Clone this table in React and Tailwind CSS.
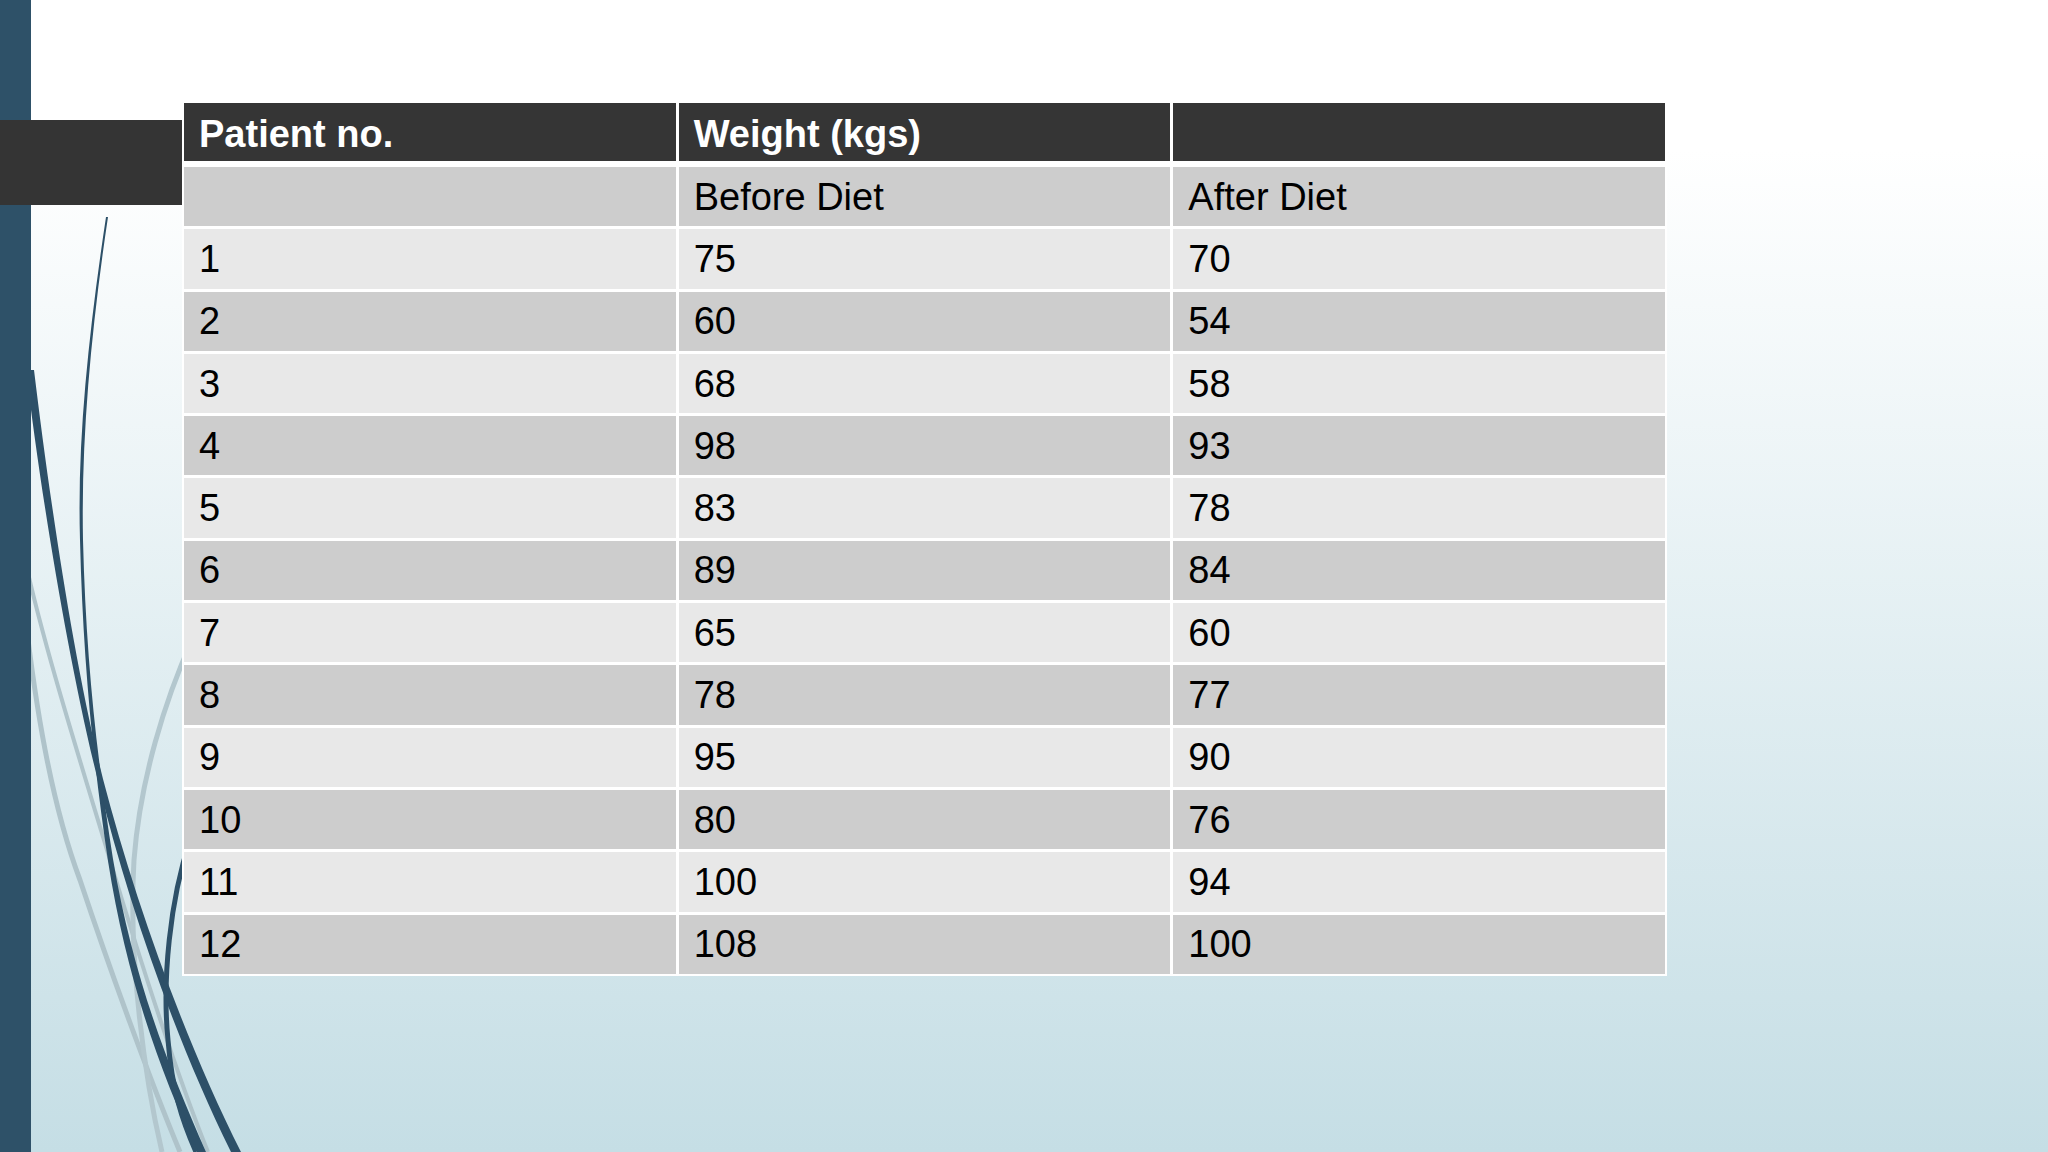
import React from 'react';

const rows = [
  ['', 'Before Diet', 'After Diet'],
  ['1', '75', '70'],
  ['2', '60', '54'],
  ['3', '68', '58'],
  ['4', '98', '93'],
  ['5', '83', '78'],
  ['6', '89', '84'],
  ['7', '65', '60'],
  ['8', '78', '77'],
  ['9', '95', '90'],
  ['10', '80', '76'],
  ['11', '100', '94'],
  ['12', '108', '100'],
];

const Swooshes = () => (
  <svg
    className="absolute inset-0 w-full h-full pointer-events-none"
    viewBox="0 0 2048 1152"
    fill="none"
  >
    {/* light strands */}
    <path d="M25 560 C45 650 80 760 110 860 C140 960 175 1070 208 1152" stroke="#afc3ca" strokeWidth="4" />
    <path d="M25 615 C35 700 50 800 80 880 C110 970 150 1080 180 1152" stroke="#afc3ca" strokeWidth="5" />
    <path d="M192 640 C165 700 140 780 134 860 C128 960 145 1080 162 1152" stroke="#b3c7ce" strokeWidth="5" />
    {/* dark strands */}
    <path
      d="M106 217 C89 330 77 440 80 540 C83 660 93 760 108 861 C127 982 161 1072 197 1152 L206 1152 C169 1068 133 978 113 859 C97 758 86 660 83 540 C81 440 91 330 108 217 Z"
      fill="#2d5068"
    />
    <path
      d="M26 370 C41 495 68 660 98 781 C127 901 176 1041 231 1152 L241 1152 C184 1039 134 898 103 779 C73 659 49 494 34 370 Z"
      fill="#2d5068"
    />
    <path d="M190 840 C170 900 162 980 168 1040 C172 1090 182 1120 196 1152" stroke="#2d5068" strokeWidth="5" />
  </svg>
);

export default function App() {
  return (
    <div
      className="relative w-[2048px] h-[1152px] overflow-hidden flex bg-linear-to-b from-white from-[13%] to-[#c5dee5]"
      style={{ fontFamily: '"Liberation Sans", Arial, sans-serif' }}
    >
      <Swooshes />

      {/* left accent bar */}
      <div className="relative z-10 w-[31px] h-full bg-[#2e5168] shrink-0" />

      {/* title tab that sits over the bar */}
      <div className="absolute left-0 top-[120px] z-20 w-[182px] h-[85px] bg-[#343434]" />

      <div className="relative z-10 pt-[101px] pl-[151px]">
        <div className="w-[1485px] bg-white p-[2px] flex flex-col gap-[3px]">
          <div className="grid grid-cols-3 gap-x-[3px] mb-[3px] bg-white">
            {['Patient no.', 'Weight (kgs)', ''].map((h, i) => (
              <div
                key={i}
                className="h-[58px] bg-[#353535] text-white font-bold text-[38px] leading-[46px] flex items-center pl-[15px] pt-[4px]"
              >
                {h}
              </div>
            ))}
          </div>

          {rows.map((r, i) => (
            <div key={i} className="grid grid-cols-3 gap-x-[3px]">
              {r.map((c, j) => (
                <div
                  key={j}
                  className={`h-[59.3px] text-black text-[38px] leading-[46px] flex items-center pl-[15px] ${
                    i % 2 === 0 ? 'bg-[#cdcdcd]' : 'bg-[#e8e8e8]'
                  }`}
                >
                  {c}
                </div>
              ))}
            </div>
          ))}
        </div>
      </div>
    </div>
  );
}
